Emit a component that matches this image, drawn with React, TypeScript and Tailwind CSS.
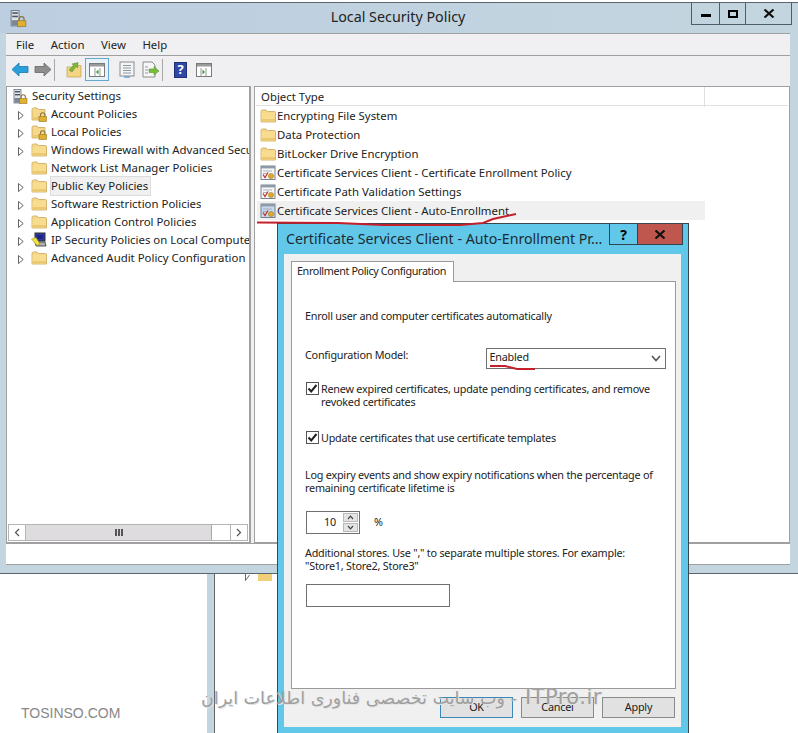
import { ReactNode } from "react";

const treeItems = [
  { label: "Account Policies", icon: "lock", arrow: true },
  { label: "Local Policies", icon: "lock", arrow: true },
  { label: "Windows Firewall with Advanced Security", icon: "folder", arrow: true },
  { label: "Network List Manager Policies", icon: "folder", arrow: false },
  { label: "Public Key Policies", icon: "folder", arrow: true, selected: true },
  { label: "Software Restriction Policies", icon: "folder", arrow: true },
  { label: "Application Control Policies", icon: "folder", arrow: true },
  { label: "IP Security Policies on Local Computer", icon: "ip", arrow: true },
  { label: "Advanced Audit Policy Configuration", icon: "folder", arrow: true },
];

const objectRows = [
  { label: "Encrypting File System", icon: "folder" },
  { label: "Data Protection", icon: "folder" },
  { label: "BitLocker Drive Encryption", icon: "folder" },
  { label: "Certificate Services Client - Certificate Enrollment Policy", icon: "cert" },
  { label: "Certificate Path Validation Settings", icon: "cert" },
  { label: "Certificate Services Client - Auto-Enrollment", icon: "cert", selected: true },
];

function Folder() {
  return (
    <svg width="16" height="14" viewBox="0 0 16 14" className="shrink-0">
      <path d="M1 2.5 Q1 1 2.5 1 H6 L7.5 2.5 H14.5 Q15.5 2.5 15.5 3.5 V13 H1 Z" fill="#f5d88a" stroke="#c9a85c" strokeWidth="0.8" />
      <rect x="1.5" y="4" width="13.5" height="8.5" fill="#f8dd90" />
      <rect x="1.5" y="10" width="13.5" height="2.6" fill="#ecc873" />
    </svg>
  );
}

function Padlock({ x, y }: { x: number; y: number }) {
  return (
    <g transform={`translate(${x} ${y})`}>
      <path d="M2 4 V2.5 A2.2 2.2 0 0 1 6.4 2.5 V4" fill="none" stroke="#8a7440" strokeWidth="1.1" />
      <rect x="0.5" y="4" width="7.5" height="5" fill="#e0b030" stroke="#96761e" strokeWidth="0.6" />
    </g>
  );
}

function LockFolder() {
  return (
    <svg width="16" height="16" viewBox="0 0 16 16" className="shrink-0">
      <path d="M1 3.5 Q1 2 2.5 2 H6 L7.5 3.5 H14 V14 H1 Z" fill="#f5d88a" stroke="#c9a85c" strokeWidth="0.8" />
      <rect x="1.5" y="11" width="12" height="2.6" fill="#ecc873" />
      <Padlock x={7.5} y={6.5} />
    </svg>
  );
}

function ServerLock({ size = 15 }: { size?: number }) {
  return (
    <svg width={size} height={size} viewBox="0 0 15 15" className="shrink-0">
      <rect x="1" y="0.5" width="7" height="13.5" fill="#dfe3e8" stroke="#6c7480" strokeWidth="0.8" />
      <rect x="2" y="2" width="5" height="1.4" fill="#4c5560" />
      <rect x="2" y="5" width="5" height="1.4" fill="#4c5560" />
      <rect x="1.4" y="9" width="6.2" height="4.6" fill="#7c8794" />
      <Padlock x={6} y={5.5} />
    </svg>
  );
}

function IpIcon() {
  return (
    <svg width="16" height="16" viewBox="0 0 16 16" className="shrink-0">
      <rect x="4" y="1" width="10" height="8" fill="#2c3a9c" stroke="#333" strokeWidth="1" />
      <rect x="6" y="3" width="6" height="4" fill="#1c258c" />
      <path d="M4 10 H14 L15 14 H5 Z" fill="#b4b4ac" stroke="#333" strokeWidth="0.8" />
      <path d="M0.5 7 L5 5.5 L9 12 L6 13.5 Z" fill="#f2e23c" stroke="#8f8420" strokeWidth="0.5" />
    </svg>
  );
}

function CertIcon({ active }: { active?: boolean }) {
  return (
    <svg width="16" height="16" viewBox="0 0 16 16" className="shrink-0">
      <rect x="1" y="1" width="14" height="13.5" fill={active ? "#c6d8ee" : "#f6f6f6"} stroke="#6b7784" strokeWidth="0.9" />
      <rect x="1" y="1" width="14" height="2.4" fill="#8d9aa8" />
      <path d="M3 6 H12 M3 8.5 H8" stroke="#9aa5b0" strokeWidth="0.8" />
      <path d="M3 9.5 L5 12.5 L8 7.5" fill="none" stroke="#c23a30" strokeWidth="1.3" />
      <circle cx="11" cy="11" r="2.6" fill="#e0a92e" stroke="#96761e" strokeWidth="0.5" />
    </svg>
  );
}

function RowIcon({ kind, active }: { kind: string; active?: boolean }) {
  if (kind === "lock") return <LockFolder />;
  if (kind === "ip") return <IpIcon />;
  if (kind === "cert") return <CertIcon active={active} />;
  return <Folder />;
}

function TreeArrow() {
  return (
    <svg width="6" height="9" viewBox="0 0 6 9" className="shrink-0">
      <path d="M0.5 0.5 L5.2 4.5 L0.5 8.5 Z" fill="#fff" stroke="#555" strokeWidth="0.9" />
    </svg>
  );
}

function CloseX() {
  return (
    <svg width="12" height="9" viewBox="0 0 12 9">
      <path d="M1.5 0.5 L10.5 8.5 M10.5 0.5 L1.5 8.5" stroke="#111" strokeWidth="2.2" />
    </svg>
  );
}

function WinButton({ children, className }: { children: ReactNode; className: string }) {
  return <div className={`flex items-center justify-center h-[21px] border-[#4f5d66] ${className}`}>{children}</div>;
}

function Toolbar() {
  return (
    <div className="flex items-center h-[30px] pl-[5px] pb-[3px] bg-[#f0f0f2] shrink-0">
      <svg width="18" height="15" viewBox="0 0 18 15">
        <path d="M1 7.5 L8 1 V4.5 H17 V10.5 H8 V14 Z" fill="#2b9fdc" stroke="#1b78ad" strokeWidth="0.8" />
      </svg>
      <svg width="18" height="15" viewBox="0 0 18 15" className="ml-[5px]">
        <path d="M17 7.5 L10 1 V4.5 H1 V10.5 H10 V14 Z" fill="#8d8d8d" stroke="#666" strokeWidth="0.8" />
      </svg>
      <div className="w-px h-[22px] bg-[#a8a8a8] ml-[2px]" />
      <svg width="16" height="16" viewBox="0 0 16 16" className="ml-[11px]">
        <path d="M1 5 H6 L7 3.5 H15 V15 H1 Z" fill="#f3d583" stroke="#c2a052" strokeWidth="0.7" />
        <path d="M3 8 L8 3 L6 2 L12 0.5 L11.5 6 L10 4.5 L6 10 Z" fill="#7cb83c" stroke="#4f8520" strokeWidth="0.5" />
      </svg>
      <div className="flex items-center justify-center w-[24px] h-[23px] ml-[3px] border border-[#66a7d0] bg-[#e8f2f9]">
        <svg width="16" height="14" viewBox="0 0 16 14">
          <rect x="0.5" y="0.5" width="15" height="13" fill="#fff" stroke="#7a7a7a" />
          <rect x="1" y="1" width="14" height="2.5" fill="#9a9a9a" />
          <path d="M6 5 V13 M11 5 V13" stroke="#999" />
          <path d="M9.5 6.5 L7 9 L9.5 11.5 Z" fill="#3a9a3a" />
        </svg>
      </div>
      <svg width="16" height="17" viewBox="0 0 16 17" className="ml-[10px]">
        <rect x="1" y="1" width="14" height="14" fill="#f4f4f4" stroke="#8b8b8b" />
        <path d="M4 4.5 H12 M4 7 H12 M4 9.5 H12 M4 12 H12" stroke="#8d99a5" />
        <path d="M5 16 H11" stroke="#5a9fd0" strokeWidth="1.4" />
      </svg>
      <svg width="18" height="17" viewBox="0 0 18 17" className="ml-[7px]">
        <path d="M1 1 H10 L13 4 V16 H1 Z" fill="#f6f6f6" stroke="#8b8b8b" />
        <path d="M3 6 H6 M3 9 H6 M3 12 H6" stroke="#8d99a5" />
        <path d="M7 8 H12 V5.5 L17 10 L12 14 V11.5 H7 Z" fill="#78bd3c" stroke="#4f8520" strokeWidth="0.5" />
      </svg>
      <div className="w-px h-[22px] bg-[#a8a8a8] ml-[2px]" />
      <div className="flex items-center justify-center w-[13px] h-[16px] ml-[11px] bg-[#2f47a5] border border-[#1f2f78] text-white text-[13px] font-bold leading-none">?</div>
      <svg width="16" height="14" viewBox="0 0 16 14" className="ml-[9px]">
        <rect x="0.5" y="0.5" width="15" height="13" fill="#fff" stroke="#7a7a7a" />
        <rect x="1" y="1" width="14" height="2.5" fill="#9a9a9a" />
        <path d="M5 5 V13 M10 5 V13" stroke="#999" />
        <path d="M6.5 6.5 L9 9 L6.5 11.5 Z" fill="#3a9a3a" />
      </svg>
    </div>
  );
}

function TreePane() {
  return (
    <div className="flex flex-col w-[245px] bg-white border border-[#a0a0a0] border-r-2 overflow-hidden">
      <div className="flex-1 overflow-hidden">
        <div className="flex items-center h-[18px] pl-[6px] gap-[4px]">
          <ServerLock />
          <span>Security Settings</span>
        </div>
        {treeItems.map((item) => (
          <div key={item.label} className="flex items-center h-[18px] pl-[11px] whitespace-nowrap">
            <div className="w-[6px] flex justify-center mt-[2px]">{item.arrow && <TreeArrow />}</div>
            <div className="ml-[7px] w-[16px]">
              <RowIcon kind={item.icon} />
            </div>
            <span className={`ml-[4px] max-w-[198px] overflow-hidden ${item.selected ? "bg-[#f0f0f0] outline outline-[#dcdcdc] pr-[2px]" : ""}`}>
              {item.label}
            </span>
          </div>
        ))}
      </div>
      <div className="flex items-center h-[17px] mx-[1px] mb-[1px] border border-[#b4b4b4] bg-white shrink-0">
        <div className="flex items-center justify-center w-[17px] h-full border-r border-[#b4b4b4] text-[#555]">
          <svg width="6" height="9" viewBox="0 0 6 9"><path d="M5 1 L1.5 4.5 L5 8" fill="none" stroke="#555" strokeWidth="1.2" /></svg>
        </div>
        <div className="flex items-center justify-center w-[186px] h-full bg-[#dedcde] border-r border-[#a8a8a8]">
          <div className="w-[8px] h-[7px] border-x-2 border-[#555] flex justify-center"><div className="w-[2px] h-full bg-[#555]" /></div>
        </div>
        <div className="flex-1" />
        <div className="flex items-center justify-center w-[17px] h-full border-l border-[#b4b4b4]">
          <svg width="6" height="9" viewBox="0 0 6 9"><path d="M1 1 L4.5 4.5 L1 8" fill="none" stroke="#555" strokeWidth="1.2" /></svg>
        </div>
      </div>
    </div>
  );
}

function ObjectPane() {
  return (
    <div className="flex-1 flex flex-col bg-white border border-[#a0a0a0]">
      <div className="grid grid-cols-[449px_1fr] h-[19px] mx-[1px] border-b border-[#e0e0e0] shrink-0">
        <div className="pl-[5px] border-r border-[#e0e0e0] leading-[20px]">Object Type</div>
        <div />
      </div>
      <div className="pl-[2px]">
        {objectRows.map((row) => (
          <div key={row.label} className={`flex items-center h-[19px] w-[448px] whitespace-nowrap ${row.selected ? "bg-[#f0f0f0]" : ""}`}>
            <div className="w-[16px] ml-[3px]">
              <RowIcon kind={row.icon} active={row.selected} />
            </div>
            <span className="ml-[1px]">{row.label}</span>
          </div>
        ))}
      </div>
    </div>
  );
}

function MainWindow() {
  return (
    <div className="absolute left-0 top-[2px] w-[798px] h-[572px] flex flex-col bg-[#c3d5df] border-t border-b border-[#5a666e]">
      <div className="relative flex items-center justify-center h-[30px] shrink-0 bg-gradient-to-r from-[#bccee0] to-[#c3d6df]">
        <div className="absolute left-[10px] top-[7px]"><ServerLock size={17} /></div>
        <span className="text-[14.3px] text-[#222] ml-[-2px] mt-[-2px]">Local Security Policy</span>
        <div className="absolute left-[691px] top-0 flex border-x border-b border-[#4f5d66]">
          <WinButton className="w-[28px] border-r">
            <div className="w-[10px] h-[3px] bg-black mt-[4px]" />
          </WinButton>
          <WinButton className="w-[26px] border-r">
            <div className="w-[10px] h-[8px] border-2 border-black" />
          </WinButton>
          <WinButton className="w-[45px]">
            <CloseX />
          </WinButton>
        </div>
      </div>
      <div className="flex flex-col flex-1 ml-[6px] mr-[8px] mb-[8px] bg-[#f0f0f2] border-t border-[#a0a0a0]">
        <div className="flex items-center h-[22px] pl-[10px] gap-[16.5px] border-b border-[#a0a0a0] bg-[#f0f0f2] shrink-0">
          <span>File</span>
          <span>Action</span>
          <span>View</span>
          <span>Help</span>
        </div>
        <Toolbar />
        <div className="flex flex-1 gap-[3px] min-h-0">
          <TreePane />
          <ObjectPane />
        </div>
        <div className="h-[22px] bg-white border-t border-b border-[#a0a0a0] shrink-0" />
      </div>
    </div>
  );
}

function Checkbox() {
  return (
    <div className="flex items-center justify-center w-[13px] h-[13px] border border-[#555] bg-white shrink-0">
      <svg width="11" height="11" viewBox="0 0 11 11"><path d="M1.5 5.5 L4.2 8.5 L9.5 2" fill="none" stroke="#222" strokeWidth="2" /></svg>
    </div>
  );
}

function DialogButton({ label, active }: { label: string; active?: boolean }) {
  return (
    <div className={`flex items-center justify-center w-[73px] h-[21px] bg-[#e1e1e1] border ${active ? "border-[#3b87b8]" : "border-[#8a8a8a]"}`}>
      {label}
    </div>
  );
}

function Dialog() {
  return (
    <div className="absolute left-[277px] top-[223px] w-[412px] h-[511px] flex flex-col bg-[#62c8e9] border-t border-x border-[#39474f]">
      <div className="relative flex items-center h-[30px] pl-[8px] shrink-0">
        <span className="text-[14.2px] text-[#1c2b33] whitespace-nowrap mt-[-1px]">Certificate Services Client - Auto-Enrollment Pr...</span>
        <div className="absolute left-[331px] top-0 flex h-[21px]">
          <div className="flex items-center justify-center w-[29px] border-x border-b border-[#2f4650] font-bold text-[14px] text-black">?</div>
          <div className="flex items-center justify-center w-[45px] border-r border-b border-[#2f4650] bg-[#c0574e]">
            <CloseX />
          </div>
        </div>
      </div>
      <div className="flex flex-col flex-1 ml-[6px] mr-[7px] mb-[7px] bg-[#f0f0f0] pl-[7px] pr-[5px] pt-[7px] text-[10.8px] tracking-[-0.22px]">
        <div className="flex shrink-0">
          <div className="w-[163px] h-[21px] pl-[5px] bg-white border-x border-t border-[#9a9a9a] leading-[18px] tracking-[-0.38px] whitespace-nowrap z-10 mb-[-1px]">
            Enrollment Policy Configuration
          </div>
        </div>
        <div className="h-[408px] bg-white border border-[#9a9a9a] pl-[13px] pr-[9px] pt-[26px] shrink-0">
          <p className="leading-[16px]">Enroll user and computer certificates automatically</p>
          <div className="flex items-start mt-[24px]">
            <span className="w-[182px] leading-[16px] mt-[-1px]">Configuration Model:</span>
            <div className="flex items-center justify-between w-[180px] h-[21px] pl-[2px] pr-[4px] border border-[#707070]">
              <span className="mt-[-2px]">Enabled</span>
              <svg width="10" height="7" viewBox="0 0 10 7"><path d="M1 1 L5 5.5 L9 1" fill="none" stroke="#555" strokeWidth="1.6" /></svg>
            </div>
          </div>
          <div className="flex gap-[2px] mt-[13px] items-start leading-[13px]">
            <div className="ml-[1px]"><Checkbox /></div>
            <span>Renew expired certificates, update pending certificates, and remove revoked certificates</span>
          </div>
          <div className="flex gap-[2px] mt-[23px] items-center leading-[13px]">
            <div className="ml-[1px]"><Checkbox /></div>
            <span>Update certificates that use certificate templates</span>
          </div>
          <p className="mt-[24px] leading-[13px]">Log expiry events and show expiry notifications when the percentage of remaining certificate lifetime is</p>
          <div className="flex items-center mt-[17px] ml-[1px]">
            <div className="flex w-[54px] h-[23px] border border-[#707070]">
              <div className="flex-1 text-right pr-[6px] leading-[19px]">10</div>
              <div className="flex flex-col w-[17px] gap-px p-px bg-white">
                <div className="flex-1 flex items-center justify-center bg-[#e4e4e4] border border-[#b8b8b8]">
                  <svg width="7" height="5" viewBox="0 0 7 5"><path d="M1 4 L3.5 1.2 L6 4" fill="none" stroke="#444" strokeWidth="1.2" /></svg>
                </div>
                <div className="flex-1 flex items-center justify-center bg-[#e4e4e4] border border-[#b8b8b8]">
                  <svg width="7" height="5" viewBox="0 0 7 5"><path d="M1 1 L3.5 3.8 L6 1" fill="none" stroke="#444" strokeWidth="1.2" /></svg>
                </div>
              </div>
            </div>
            <span className="ml-[14px] mt-[-1px]">%</span>
          </div>
          <p className="mt-[12px] leading-[13px]">
            Additional stores. Use "," to separate multiple stores. For example:
            <br />
            "Store1, Store2, Store3"
          </p>
          <div className="w-[144px] h-[23px] mt-[12px] ml-[1px] border border-[#707070]" />
        </div>
        <div className="flex justify-end gap-[8px] mt-[8px] pr-[1px]">
          <DialogButton label="OK" active />
          <DialogButton label="Cancel" />
          <DialogButton label="Apply" />
        </div>
      </div>
    </div>
  );
}

export default function App() {
  return (
    <div className="relative w-[798px] h-[733px] overflow-hidden bg-white text-[11.4px] text-[#222] font-['Noto_Sans','Liberation_Sans',sans-serif]">
      {/* window behind */}
      <div className="absolute left-[207px] top-[573px] w-[70px] h-[160px] flex">
        <div className="w-[8px] h-full bg-[#c3d5df] border-r border-[#666]" />
        <div className="flex gap-[8px] ml-[30px] mt-[1px]">
          <svg width="5" height="7" viewBox="0 0 5 7"><path d="M0.5 0 V6.5 L4.5 1" fill="#fff" stroke="#444" strokeWidth="0.8" /></svg>
          <div className="w-[14px] h-[7px] bg-[#f0cf78]" />
        </div>
      </div>
      <MainWindow />
      <Dialog />
      {/* red pen marks */}
      <svg className="absolute left-0 top-0 pointer-events-none" width="798" height="733">
        <path d="M257 222.5 L338 223 L383 225 L460 225 L483 223 L493 219 L516 214" fill="none" stroke="#c4202c" strokeWidth="2" />
        <path d="M490 366 L505 366 L517 369 L535 369" fill="none" stroke="#c4202c" strokeWidth="2" />
      </svg>
      {/* watermarks */}
      <div className="absolute left-[21px] top-[703px] text-[14px] text-[#888] font-['Liberation_Sans',sans-serif]">TOSINSO.COM</div>
      <div dir="rtl" className="absolute left-[192px] top-[682px] w-[410px] flex items-center gap-[8px] text-[#a0a0a0] whitespace-nowrap font-['DejaVu_Sans',sans-serif] [text-shadow:1px_1px_0_#e4e4e4]">
        <span dir="ltr" className="text-[21px] tracking-[0.5px]">ITPro.ir</span>
        <span className="text-[17.5px]">- وب سایت تخصصی فناوری اطلاعات ایران</span>
      </div>
    </div>
  );
}
